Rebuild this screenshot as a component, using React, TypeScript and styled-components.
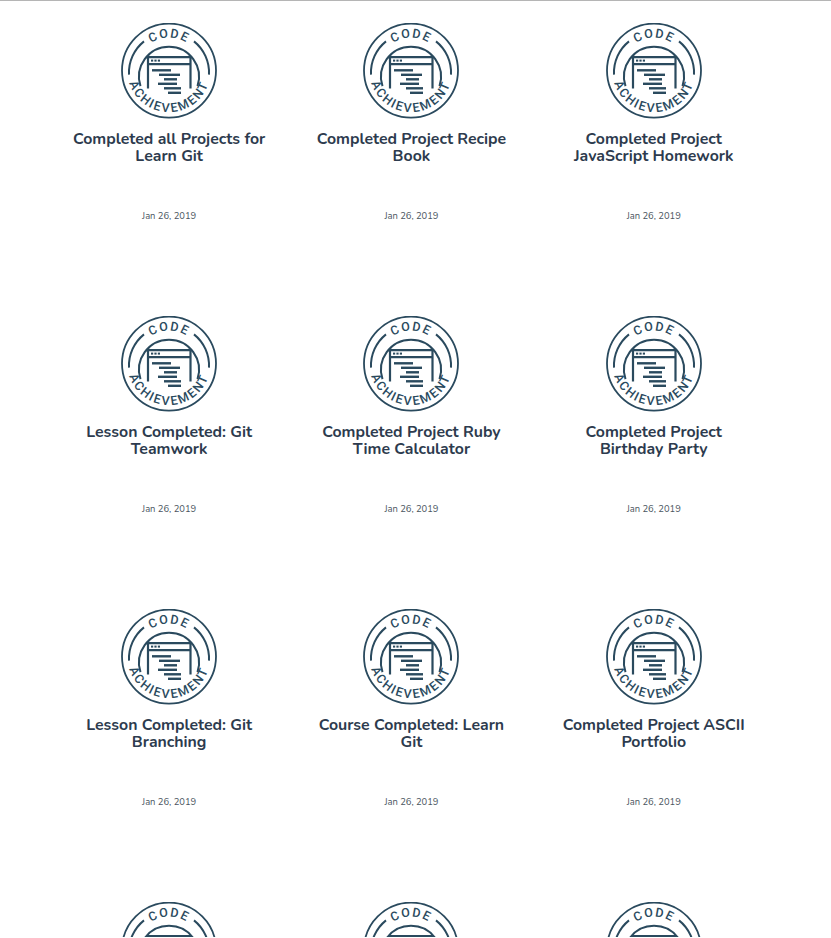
import styled, { createGlobalStyle } from 'styled-components'

const items = [
  'Completed all Projects for Learn Git',
  'Completed Project Recipe Book',
  'Completed Project JavaScript Homework',
  'Lesson Completed: Git Teamwork',
  'Completed Project Ruby Time Calculator',
  'Completed Project Birthday Party',
  'Lesson Completed: Git Branching',
  'Course Completed: Learn Git',
  'Completed Project ASCII Portfolio',
  '',
  '',
  '',
]

// x, y, width of the code lines inside the badge window
const codeBars = [
  [31, 46.5, 19],
  [38, 51, 21],
  [43, 55.5, 13],
  [37, 60, 19],
  [43, 64.5, 17],
  [47, 69, 13],
]

const GlobalStyle = createGlobalStyle`
  html, body {
    margin: 0;
    padding: 0;
    height: 938px;
    overflow: hidden;
    background: #fff;
  }
`

const Page = styled.div`
  border-top: 1px solid #b5b5b5;
  height: 937px;
  overflow: hidden;
  box-sizing: border-box;
  font-family: 'Nunito', 'Lato', 'Liberation Sans', sans-serif;
`

const Grid = styled.div`
  display: grid;
  grid-template-columns: repeat(3, 242.3px);
  grid-auto-rows: 292.9px;
  padding: 22px 0 0 48px;
`

const Card = styled.div`
  display: flex;
  flex-direction: column;
  align-items: center;
`

const Title = styled.h3`
  width: 200px;
  height: 79px;
  margin: 12px 0 0;
  font-size: 15.85px;
  line-height: 17px;
  font-weight: 700;
  text-align: center;
  color: #2d3b4e;
`

const DateLabel = styled.div`
  font-size: 9.4px;
  line-height: 12px;
  color: #4a5560;
`

const BadgeSvg = styled.svg`
  display: block;
  width: 96px;
  height: 96px;
  flex: none;
`

const BadgeText = styled.text`
  font-family: 'Roboto', 'Liberation Sans', sans-serif;
  font-size: 12.5px;
  font-weight: 500;
  fill: #2a4a5e;
`

function Badge({ id }: { id: number }) {
  const color = '#2a4a5e'
  return (
    <BadgeSvg viewBox="0 0.4 96 96">
      <defs>
        <path id={`top${id}`} d="M 15 48 A 33 33 0 0 1 81 48" />
        <path id={`bottom${id}`} d="M 6.5 48 A 41.5 41.5 0 0 0 89.5 48" />
      </defs>
      <g fill="none" stroke={color}>
        <circle cx="48" cy="48" r="47" strokeWidth="1.8" />
        <path d="M 19.5 63.5 A 30 30 0 1 1 76.5 63.5" strokeWidth="2" />
        <path d="M 23 18.8 A 40 40 0 0 0 8 52" strokeWidth="2" />
        <path d="M 73 18.8 A 40 40 0 0 1 88 52" strokeWidth="2" />
        <path d="M 27 66 V 34.5 H 69.5 V 66" strokeWidth="2.2" />
        <path d="M 27 41.5 H 69.5" strokeWidth="2.2" />
      </g>
      <g fill={color}>
        <rect x="30" y="37" width="2.2" height="2" />
        <rect x="33.4" y="37" width="2.2" height="2" />
        <rect x="36.8" y="37" width="2.2" height="2" />
        {codeBars.map(([x, y, w]) => (
          <rect key={y} x={x} y={y} width={w} height="2.4" />
        ))}
      </g>
      <BadgeText letterSpacing="1.6" textAnchor="middle">
        <textPath href={`#top${id}`} startOffset="50%">CODE</textPath>
      </BadgeText>
      <BadgeText letterSpacing="1.8" textAnchor="middle">
        <textPath href={`#bottom${id}`} startOffset="50%">ACHIEVEMENT</textPath>
      </BadgeText>
    </BadgeSvg>
  )
}

export default function App() {
  return (
    <Page>
      <GlobalStyle />
      <Grid>
        {items.map((title, i) => (
          <Card key={i}>
            <Badge id={i} />
            {title && <Title>{title}</Title>}
            {title && <DateLabel>Jan 26, 2019</DateLabel>}
          </Card>
        ))}
      </Grid>
    </Page>
  )
}
